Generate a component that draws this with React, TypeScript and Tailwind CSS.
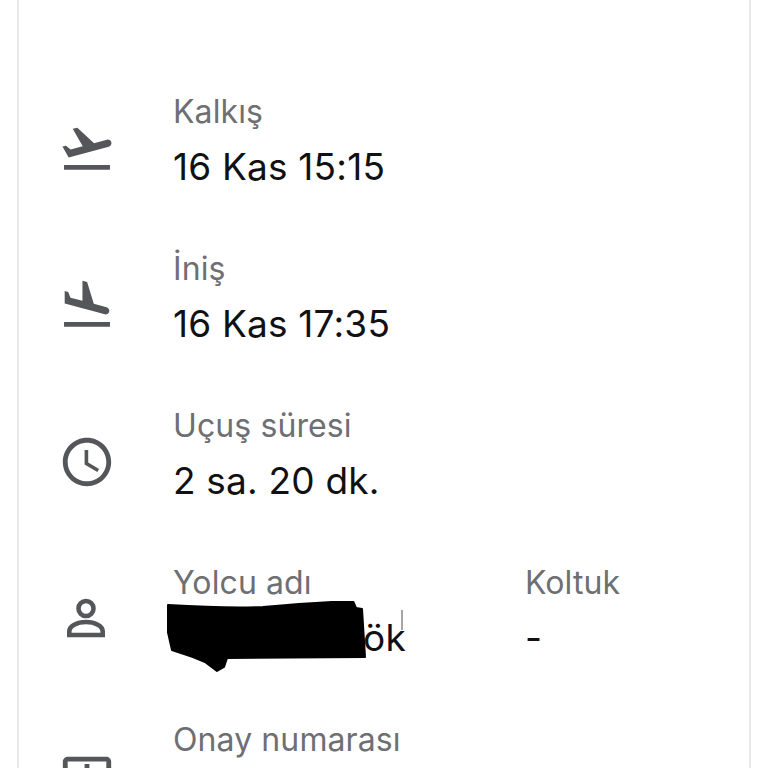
const label = "text-[32px] leading-[40px] tracking-[0.1px] text-[#6e6f73]";
const value = "text-[37px] leading-[44px] tracking-[0.2px] text-[#111114] mt-[13px]";

function Takeoff() {
  return (
    <svg viewBox="0 0 24 24" className="w-[58px] h-[58px] shrink-0 fill-[#55565a]">
      <path d="M2.5 19h19v2h-19v-2zm19.57-9.36c-.21-.8-1.04-1.28-1.84-1.06L14.92 10l-6.9-6.43-1.93.51 4.14 7.17-4.97 1.33-1.97-1.54-1.45.39 2.59 4.49L21 11.49c.81-.23 1.28-1.05 1.07-1.85z" />
    </svg>
  );
}

function Land() {
  return (
    <svg viewBox="0 0 24 24" className="w-[58px] h-[58px] shrink-0 fill-[#55565a]">
      <path d="M2.5 19h19v2h-19v-2zm7.18-5.73l4.35 1.16 5.31 1.42c.8.21 1.62-.26 1.84-1.06.21-.8-.26-1.62-1.06-1.84l-5.31-1.42-2.76-9.02L10.12 2v8.28L5.15 8.95l-.93-2.32-1.45-.39v5.17l1.6.43 5.31 1.43z" />
    </svg>
  );
}

function Clock() {
  return (
    <svg viewBox="0 0 24 24" className="w-[58px] h-[58px] shrink-0 fill-[#55565a]">
      <path d="M11.99 2C6.47 2 2 6.48 2 12s4.47 10 9.99 10C17.52 22 22 17.52 22 12S17.52 2 11.99 2zM12 20c-4.42 0-8-3.58-8-8s3.58-8 8-8 8 3.58 8 8-3.58 8-8 8z" />
      <path d="M12.5 7H11v6l5.25 3.15.75-1.23-4.5-2.67z" />
    </svg>
  );
}

function Person() {
  return (
    <svg viewBox="0 0 58 58" className="w-[58px] h-[58px] shrink-0 fill-none stroke-[#55565a]" strokeWidth="4.6">
      <circle cx="28" cy="18.5" r="7.5" />
      <path d="M11.3 45v-3.5c0-5.5 7.5-9.5 16.7-9.5s16.7 4 16.7 9.5V45z" />
    </svg>
  );
}

function Ticket() {
  return (
    <svg viewBox="0 0 24 24" className="w-[58px] h-[58px] shrink-0 fill-[#55565a]">
      <path d="M22 10V6c0-1.11-.9-2-2-2H4c-1.1 0-1.99.89-1.99 2v4c1.1 0 1.99.9 1.99 2s-.89 2-2 2v4c0 1.1.9 2 2 2h16c1.1 0 2-.9 2-2v-4c-1.1 0-2-.9-2-2s.9-2 2-2zm-2-1.46c-1.19.69-2 1.99-2 3.46s.81 2.77 2 3.46V18H4v-2.54c1.19-.69 2-1.99 2-3.46 0-1.48-.8-2.77-1.99-3.46L4 6h16v2.54zM11 15h2v2h-2zm0-4h2v2h-2zm0-4h2v2h-2z" />
    </svg>
  );
}

function Row({ icon, l, v }: { icon: React.ReactNode; l: string; v: string }) {
  return (
    <div className="flex items-start h-[157px] gap-[57px]">
      <div className="mt-[27px]">{icon}</div>
      <div>
        <div className={label}>{l}</div>
        <div className={value}>{v}</div>
      </div>
    </div>
  );
}

export default function App() {
  return (
    <div
      className="h-[768px] overflow-hidden bg-white"
      style={{ fontFamily: "Inter, 'Noto Sans', sans-serif" }}
    >
      <div className="mx-[17px] h-[768px] border-x-2 border-[#e9e9e9] pl-[39px] pt-[92px]">
        <Row icon={<Takeoff />} l="Kalkış" v="16 Kas 15:15" />
        <Row icon={<Land />} l="İniş" v="16 Kas 17:35" />
        <Row icon={<Clock />} l="Uçuş süresi" v="2 sa. 20 dk." />
        <div className="flex items-start h-[157px] gap-[57px]">
          <div className="mt-[27px]"><Person /></div>
          <div className="relative w-[352px]">
            <div className={label}>Yolcu adı</div>
            <div className={value + " text-right pr-[119px]"}>ök</div>
            <svg viewBox="0 0 240 72" className="absolute left-[-6px] top-[38px] w-[240px] h-[72px]">
              <path
                d="M1 4 C35 6 70 7 96 6 C130 3 160 1 186 0 L189 7 L195 8 L198 56 L60 57 L57 66 L50 70 L38 61 L26 56 L5 49 L0 27 Z"
                fill="#000"
                stroke="#000"
                strokeLinejoin="round"
                strokeWidth="2"
              />
              <path d="M235 9 L235 29" stroke="#888" strokeWidth="1.5" />
            </svg>
          </div>
          <div className="ml-[-57px]">
            <div className={label}>Koltuk</div>
            <div className={value}>-</div>
          </div>
        </div>
        <Row icon={<Ticket />} l="Onay numarası" v="" />
      </div>
    </div>
  );
}
